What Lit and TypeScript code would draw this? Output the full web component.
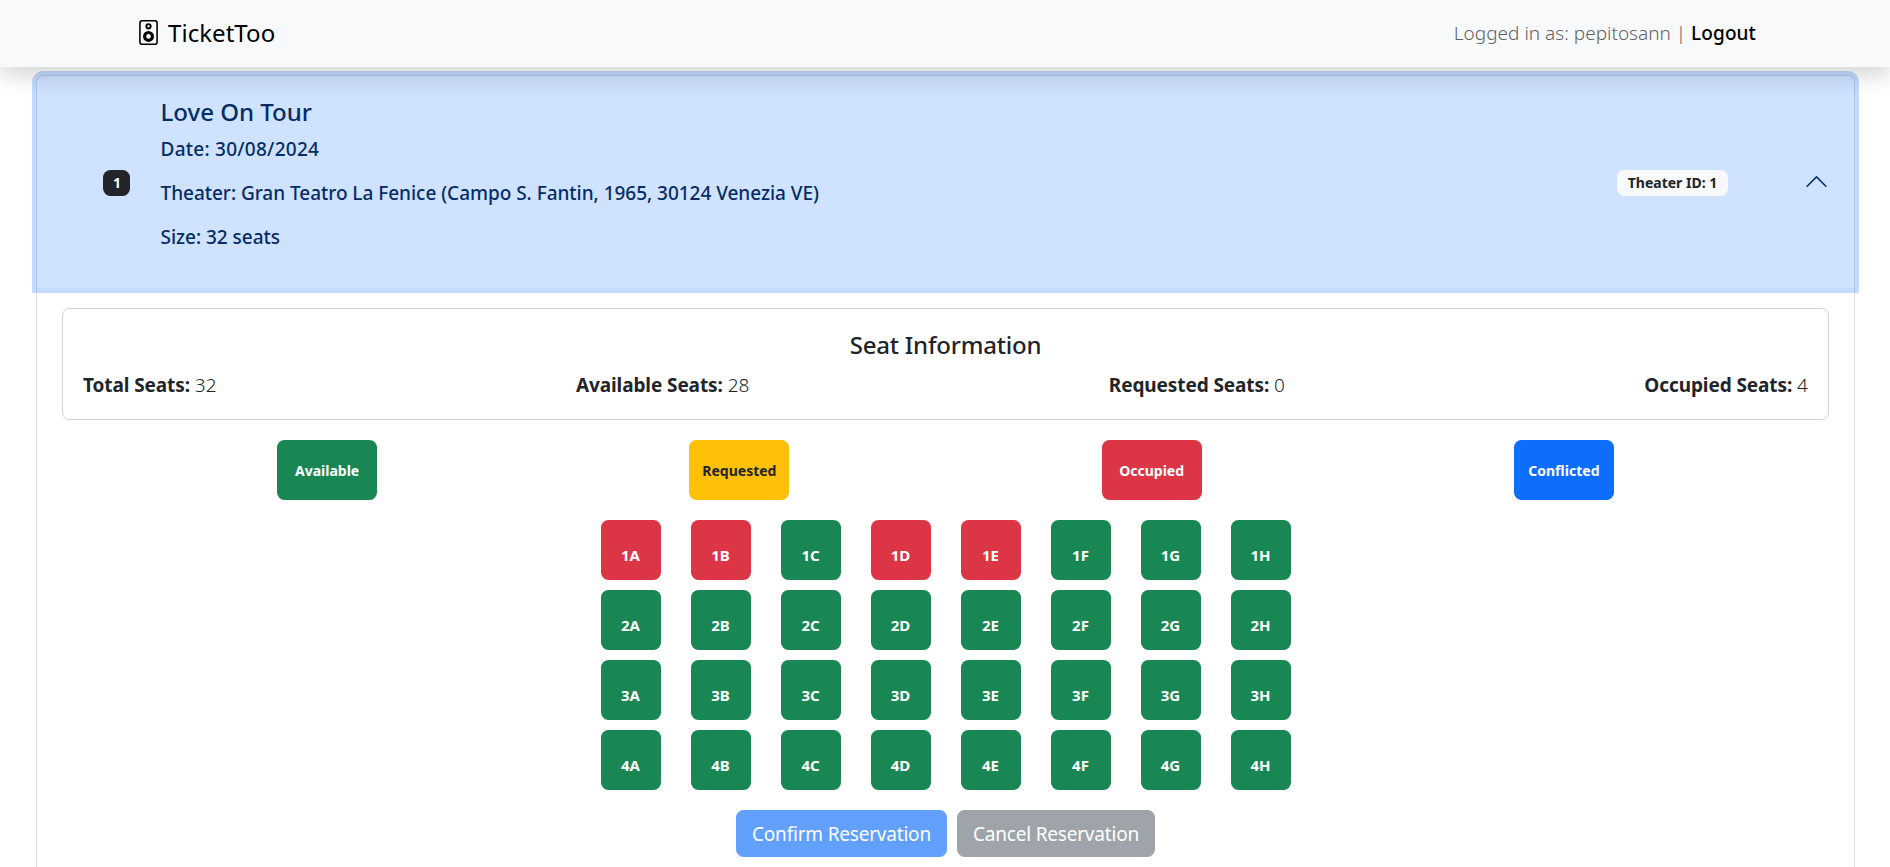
import { LitElement, html, css } from "lit";
import { customElement, property, state } from "lit/decorators.js";

type SeatStatus = "available" | "requested" | "occupied" | "conflicted";

interface Concert {
  id: number;
  name: string;
  date: string;
  theaterId: number;
  theater: string;
  address: string;
  rows: number;
  columns: number;
  occupied: string[];
}

const CONCERT: Concert = {
  id: 1,
  name: "Love On Tour",
  date: "30/08/2024",
  theaterId: 1,
  theater: "Gran Teatro La Fenice",
  address: "Campo S. Fantin, 1965, 30124 Venezia VE",
  rows: 4,
  columns: 8,
  occupied: ["1A", "1B", "1D", "1E"],
};

@customElement("site-navbar")
class SiteNavbar extends LitElement {
  @property() user = "";

  static styles = css`
    :host {
      display: flex;
      justify-content: center;
      height: 67px;
      background: #f8f9fa;
      box-shadow: 0 10px 20px rgba(0, 0, 0, 0.15);
      position: relative;
      z-index: 2;
    }
    .inner {
      width: 1620px;
      padding-left: 2px;
      display: flex;
      align-items: center;
      justify-content: space-between;
    }
    .brand {
      display: flex;
      align-items: center;
      gap: 7px;
      font-size: 24px;
      line-height: 36px;
      letter-spacing: 0.05px;
      color: #000;
      text-decoration: none;
    }
    .brand svg {
      width: 25px;
      height: 25px;
      margin-top: -2px;
    }
    .name {
      margin-top: -2px;
    }
    .session {
      margin-top: -2px;
      font-size: 19px;
      font-weight: 300;
      color: #606162;
    }
    .logout {
      font-weight: 500;
      color: #000;
      letter-spacing: 0.1px;
      text-decoration: none;
    }
  `;

  render() {
    return html`
      <div class="inner">
        <a class="brand">
          <svg viewBox="0 0 16 16" fill="currentColor">
            <path
              d="M12 1a1 1 0 0 1 1 1v12a1 1 0 0 1-1 1H4a1 1 0 0 1-1-1V2a1 1 0 0 1 1-1zM4 0a2 2 0 0 0-2 2v12a2 2 0 0 0 2 2h8a2 2 0 0 0 2-2V2a2 2 0 0 0-2-2z"
            />
            <path
              d="M8 4.75a.75.75 0 1 1 0-1.5.75.75 0 0 1 0 1.5M8 6a2 2 0 1 0 0-4 2 2 0 0 0 0 4m0 3a1.5 1.5 0 1 0 0 3 1.5 1.5 0 0 0 0-3m-3.5 1.5a3.5 3.5 0 1 1 7 0 3.5 3.5 0 0 1-7 0"
            />
          </svg>
          <span class="name">TicketToo</span>
        </a>
        <span class="session">Logged in as: ${this.user} | <a class="logout">Logout</a></span>
      </div>
    `;
  }
}

@customElement("concert-header")
class ConcertHeader extends LitElement {
  @property({ attribute: false }) concert!: Concert;

  static styles = css`
    :host {
      display: block;
    }
    .toggle {
      box-sizing: border-box;
      display: flex;
      align-items: center;
      width: 100%;
      height: 212px;
      padding: 21px 25px 19px 66px;
      border: 0;
      border-radius: 6.5px 6.5px 0 0;
      background: #cfe2ff;
      color: #052c65;
      font: inherit;
      text-align: left;
      box-shadow: 0 0 0 5px rgba(13, 110, 253, 0.25);
      position: relative;
      z-index: 1;
    }
    .badge {
      box-sizing: border-box;
      height: 26px;
      padding: 0 10px;
      border-radius: 7.5px;
      font-size: 14px;
      line-height: 25px;
      font-weight: 700;
      text-align: center;
    }
    .dark {
      width: 27px;
      background: #212529;
      color: #fff;
    }
    .light {
      width: 111px;
      background: #f8f9fa;
      color: #212529;
      white-space: nowrap;
    }
    .details {
      flex: 1;
      align-self: stretch;
      margin-left: 30.5px;
      font-weight: 500;
    }
    .title {
      margin: 0 0 10px;
      font-size: 24px;
      font-weight: 500;
      line-height: 30px;
    }
    .line {
      margin: 0 0 20px;
      font-size: 19px;
      line-height: 24px;
      letter-spacing: -0.03px;
    }
    .date {
      letter-spacing: 0.25px;
    }
    .chevron {
      width: 25px;
      height: 25px;
      margin: -3px 0 0 76px;
      transform: rotate(180deg);
    }
  `;

  render() {
    const c = this.concert;
    return html`
      <button class="toggle">
        <span class="badge dark">${c.id}</span>
        <div class="details">
          <h5 class="title">${c.name}</h5>
          <p class="line date">Date: ${c.date}</p>
          <p class="line">Theater: ${c.theater} (${c.address})</p>
          <p class="line">Size: ${c.rows * c.columns} seats</p>
        </div>
        <span class="badge light">Theater ID: ${c.theaterId}</span>
        <svg class="chevron" viewBox="0 0 16 16" fill="currentColor">
          <path
            fill-rule="evenodd"
            d="M1.646 4.646a.5.5 0 0 1 .708 0L8 10.293l5.646-5.647a.5.5 0 0 1 .708.708l-6 6a.5.5 0 0 1-.708 0l-6-6a.5.5 0 0 1 0-.708z"
          />
        </svg>
      </button>
    `;
  }
}

@customElement("seat-summary")
class SeatSummary extends LitElement {
  @property({ attribute: false }) counts: [string, number][] = [];

  static styles = css`
    :host {
      display: block;
      box-sizing: border-box;
      height: 112px;
      padding: 21px 20px 19px;
      border: 1px solid rgba(0, 0, 0, 0.175);
      border-radius: 7.5px;
    }
    .title {
      margin: 0 0 10px;
      font-size: 24px;
      font-weight: 500;
      line-height: 30px;
      letter-spacing: -0.2px;
      text-align: center;
    }
    .counts {
      display: flex;
      justify-content: space-between;
      font-size: 19px;
      font-weight: 300;
      line-height: 30px;
    }
    strong {
      font-weight: 700;
      letter-spacing: -0.1px;
    }
  `;

  render() {
    return html`
      <h5 class="title">Seat Information</h5>
      <div class="counts">
        ${this.counts.map(([label, n]) => html`<span><strong>${label} Seats:</strong> ${n}</span>`)}
      </div>
    `;
  }
}

@customElement("seat-tile")
class SeatTile extends LitElement {
  @property({ reflect: true }) status: SeatStatus = "available";

  static styles = css`
    :host {
      box-sizing: border-box;
      display: flex;
      align-items: center;
      justify-content: center;
      border-radius: 7.5px;
      color: #fff;
      font-size: 14px;
      font-weight: 700;
    }
    :host([status="available"]) {
      background: #198754;
    }
    :host([status="requested"]) {
      background: #ffc107;
      color: #212529;
    }
    :host([status="occupied"]) {
      background: #dc3545;
    }
    :host([status="conflicted"]) {
      background: #0d6efd;
    }
  `;

  render() {
    return html`<slot></slot>`;
  }
}

@customElement("app-root")
class AppRoot extends LitElement {
  @state() private requested: string[] = [];

  static styles = css`
    :host {
      display: block;
      height: 867px;
      overflow: hidden;
      background: #fff;
      color: #212529;
      font-family: "Noto Sans", sans-serif;
      font-size: 19px;
      line-height: 30px;
    }
    .item {
      box-sizing: border-box;
      width: 1819px;
      height: 900px;
      margin: 8px 35px 0 36px;
      border: 1px solid #dee2e6;
      border-radius: 7.5px 7.5px 0 0;
    }
    .body {
      padding: 20px 25px;
    }
    .legend {
      display: flex;
      justify-content: space-around;
      margin-top: 20px;
      padding: 0 59px;
    }
    .key {
      width: 100px;
      height: 60px;
      padding-top: 2px;
    }
    .seats {
      display: grid;
      grid-template-columns: repeat(8, 60px);
      grid-auto-rows: 60px;
      gap: 10px 30px;
      justify-content: center;
      margin-top: 20px;
    }
    .seat {
      padding-top: 9px;
      font-size: 15px;
    }
    .actions {
      display: flex;
      justify-content: center;
      gap: 10px;
      margin-top: 20px;
    }
    .btn {
      height: 47px;
      padding: 0 15px;
      border: 1px solid transparent;
      border-radius: 7.5px;
      color: #fff;
      font: 400 19px/30px "Noto Sans", sans-serif;
      letter-spacing: -0.2px;
      opacity: 0.65;
    }
    .primary {
      background-color: #0d6efd;
      border-color: #0d6efd;
    }
    .secondary {
      background-color: #6c757d;
      border-color: #6c757d;
    }
  `;

  private statusOf(seat: string): SeatStatus {
    if (CONCERT.occupied.includes(seat)) return "occupied";
    return this.requested.includes(seat) ? "requested" : "available";
  }

  render() {
    const seats: string[] = [];
    for (let r = 1; r <= CONCERT.rows; r++)
      for (let c = 0; c < CONCERT.columns; c++) seats.push(r + String.fromCharCode(65 + c));
    const total = seats.length;
    const occupied = CONCERT.occupied.length;
    const requested = this.requested.length;
    const counts: [string, number][] = [
      ["Total", total],
      ["Available", total - occupied - requested],
      ["Requested", requested],
      ["Occupied", occupied],
    ];
    const idle = requested === 0;

    return html`
      <site-navbar user="pepitosann"></site-navbar>
      <div class="item">
        <concert-header .concert=${CONCERT}></concert-header>
        <div class="body">
          <seat-summary .counts=${counts}></seat-summary>
          <div class="legend">
            <seat-tile class="key" status="available">Available</seat-tile>
            <seat-tile class="key" status="requested">Requested</seat-tile>
            <seat-tile class="key" status="occupied">Occupied</seat-tile>
            <seat-tile class="key" status="conflicted">Conflicted</seat-tile>
          </div>
          <div class="seats">
            ${seats.map((s) => html`<seat-tile class="seat" status=${this.statusOf(s)}>${s}</seat-tile>`)}
          </div>
          <div class="actions">
            <button class="btn primary" ?disabled=${idle}>Confirm Reservation</button>
            <button class="btn secondary" ?disabled=${idle}>Cancel Reservation</button>
          </div>
        </div>
      </div>
    `;
  }
}
